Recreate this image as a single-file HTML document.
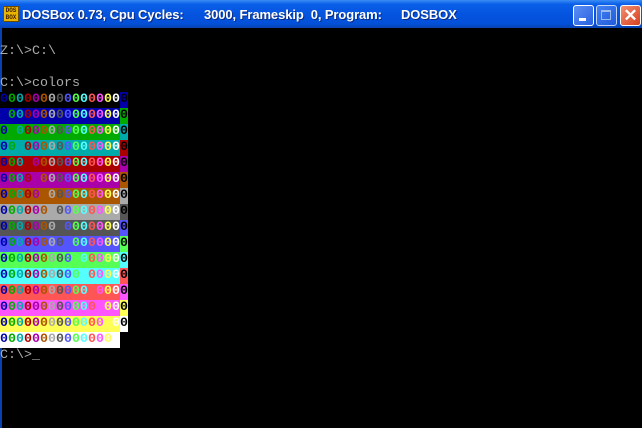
<!DOCTYPE html>
<html><head><meta charset="utf-8"><style>
html,body{margin:0;padding:0;background:#000;width:642px;height:428px;overflow:hidden}
#tb{position:absolute;left:0;top:0;width:642px;height:28px;background:linear-gradient(#3b8cf5 0%,#0a5fe8 15%,#0554e0 50%,#0350d8 85%,#0842b0 100%);}
.t{position:absolute;top:7px;color:#fff;font:bold 13px "Liberation Sans",sans-serif;white-space:pre;text-shadow:1px 1px #0a2a80;letter-spacing:-0.1px}
#ico{position:absolute;left:3px;top:6px;width:16px;height:16px;background:#e8b400;border:1px solid #6a4a00;box-sizing:border-box;font:bold 6px "Liberation Mono",monospace;color:#402000;line-height:7px;text-align:center}
.btn{position:absolute;top:5px;width:21px;height:21px;border:1px solid #fff;border-radius:3px;box-sizing:border-box;background:linear-gradient(135deg,#5a8ff5,#2a5fe0)}
#cl{background:linear-gradient(135deg,#f09070,#d84020)}
#scr{position:absolute;left:0;top:28px;width:642px;height:400px;background:#000;border-left:2px solid #0842b0;box-sizing:border-box}
pre{margin:0;position:absolute;left:0;top:28px;font-family:"Liberation Mono",monospace;font-size:13.33px;line-height:16px;color:#aaa}
pre span{display:inline-block;width:8px;height:16px;font-weight:bold}
</style></head><body>
<div id="tb"><div id="ico">DOS<br>BOX</div>
<div class="t" style="left:22px">DOSBox 0.73, Cpu Cycles:</div>
<div class="t" style="left:204px">3000, Frameskip&nbsp; 0, Program:</div>
<div class="t" style="left:401px">DOSBOX</div>
<div class="btn" style="left:573px"><div style="position:absolute;left:5px;top:12px;width:7px;height:3px;background:#fff"></div></div>
<div class="btn" style="left:596px;opacity:.75"><div style="position:absolute;left:4px;top:4px;width:10px;height:10px;border:1px solid #cde;border-top-width:2px;box-sizing:border-box"></div></div>
<div class="btn" id="cl" style="left:620px;color:#fff;font:bold 17px 'Liberation Sans',sans-serif;text-align:center;line-height:19px">✕</div>
</div>
<div id="scr"></div>
<pre id="p">

Z:\&gt;C:\

C:\&gt;colors
</pre>
<script>
var pal=["#000000","#0000aa","#00aa00","#00aaaa","#aa0000","#aa00aa","#aa5500","#aaaaaa","#555555","#5555ff","#55ff55","#55ffff","#ff5555","#ff55ff","#ffff55","#ffffff"];
var h="";
for(var r=0;r<16;r++){for(var c=0;c<16;c++){var bg=c==15?pal[(r+1)%16]:pal[r];var fg=pal[(c+1)%16];h+='<span style="background:'+bg+';color:'+fg+'">0</span>';}h+="\n";}
h+="C:\\&gt;_";
document.getElementById("p").innerHTML+=h;
</script>
</body></html>
